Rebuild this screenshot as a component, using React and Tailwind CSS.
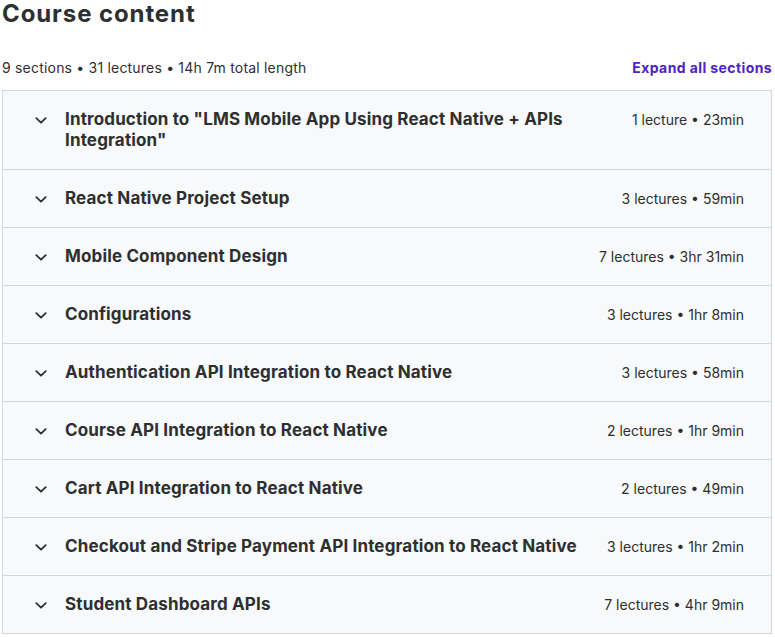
import React from 'react'

const sections = [
  { title: 'Introduction to "LMS Mobile App Using React Native + APIs Integration"', meta: '1 lecture • 23min' },
  { title: 'React Native Project Setup', meta: '3 lectures • 59min' },
  { title: 'Mobile Component Design', meta: '7 lectures • 3hr 31min' },
  { title: 'Configurations', meta: '3 lectures • 1hr 8min' },
  { title: 'Authentication API Integration to React Native', meta: '3 lectures • 58min' },
  { title: 'Course API Integration to React Native', meta: '2 lectures • 1hr 9min' },
  { title: 'Cart API Integration to React Native', meta: '2 lectures • 49min' },
  { title: 'Checkout and Stripe Payment API Integration to React Native', meta: '3 lectures • 1hr 2min' },
  { title: 'Student Dashboard APIs', meta: '7 lectures • 4hr 9min' },
]

function Chevron() {
  return (
    <svg width="12" height="7" viewBox="0 0 12 7" fill="none" stroke="currentColor" strokeWidth="1.8" strokeLinecap="round" strokeLinejoin="round">
      <path d="M1.3 1.2L6 5.7l4.7-4.5" />
    </svg>
  )
}

export default function App() {
  return (
    <div className="min-h-screen bg-white text-[#2d2f31]" style={{ fontFamily: 'Inter, "Liberation Sans", sans-serif' }}>
      <div className="w-[772px] pl-[2px]">
        <h2 className="-mt-[1px] text-[24px] font-bold leading-[30px] tracking-[0.9px]">Course content</h2>
        <div className="mt-[29px] flex items-center justify-between text-[14px] leading-[20px]">
          <span className="tracking-[0.2px]">9 sections • 31 lectures • 14h 7m total length</span>
          <button className="font-bold tracking-[0.4px] text-[#5022c3]">Expand all sections</button>
        </div>
        <div className="mt-[12px] border-x border-b border-[#d1d7dc]">
          {sections.map((s) => (
            <div key={s.title} className="flex items-start border-t border-[#d1d7dc] bg-[#f7f9fa] py-[18px] pl-[32px] pr-[27px]">
              <span className="mt-[8px] flex w-[12px] justify-center">
                <Chevron />
              </span>
              <span className="ml-[18px] w-[520px] text-[17px] font-bold leading-[21px] tracking-[0.15px]">{s.title}</span>
              <span className="ml-auto text-[14px] leading-[21px]">{s.meta}</span>
            </div>
          ))}
        </div>
      </div>
    </div>
  )
}
